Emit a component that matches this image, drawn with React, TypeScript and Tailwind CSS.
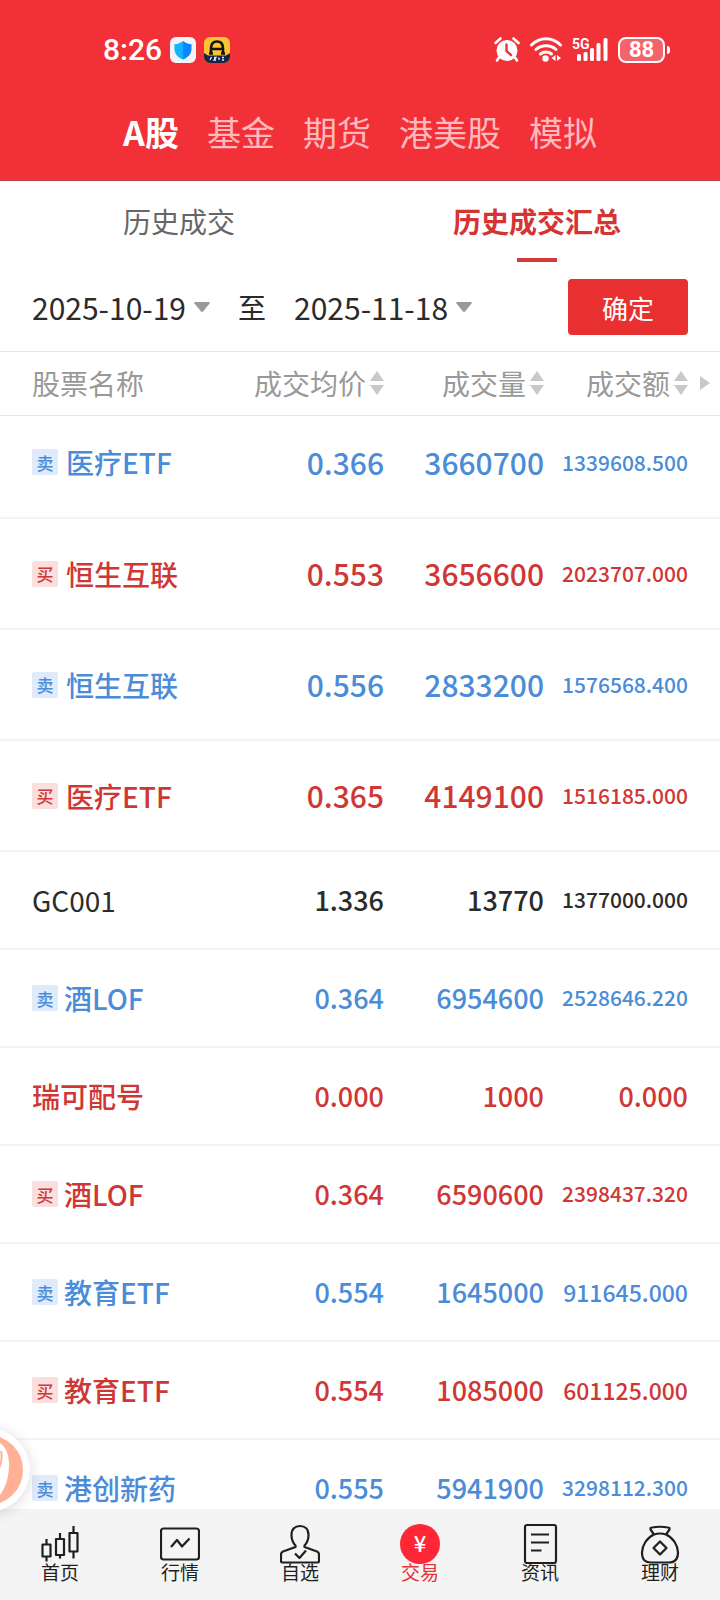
import React, { useState } from 'react';

type Side = 'buy' | 'sell' | 'none';

interface Trade {
  name: string;
  side: Side;
  tag?: boolean;
  price: string;
  volume: string;
  amount: string;
  large?: boolean;
}

const trades: Trade[] = [
  { name: '医疗ETF', side: 'sell', tag: true, price: '0.366', volume: '3660700', amount: '1339608.500', large: true },
  { name: '恒生互联', side: 'buy', tag: true, price: '0.553', volume: '3656600', amount: '2023707.000', large: true },
  { name: '恒生互联', side: 'sell', tag: true, price: '0.556', volume: '2833200', amount: '1576568.400', large: true },
  { name: '医疗ETF', side: 'buy', tag: true, price: '0.365', volume: '4149100', amount: '1516185.000', large: true },
  { name: 'GC001', side: 'none', price: '1.336', volume: '13770', amount: '1377000.000' },
  { name: '酒LOF', side: 'sell', tag: true, price: '0.364', volume: '6954600', amount: '2528646.220' },
  { name: '瑞可配号', side: 'buy', price: '0.000', volume: '1000', amount: '0.000' },
  { name: '酒LOF', side: 'buy', tag: true, price: '0.364', volume: '6590600', amount: '2398437.320' },
  { name: '教育ETF', side: 'sell', tag: true, price: '0.554', volume: '1645000', amount: '911645.000' },
  { name: '教育ETF', side: 'buy', tag: true, price: '0.554', volume: '1085000', amount: '601125.000' },
  { name: '港创新药', side: 'sell', tag: true, price: '0.555', volume: '5941900', amount: '3298112.300' },
];

const markets = ['A股', '基金', '期货', '港美股', '模拟'];
const subTabs = ['历史成交', '历史成交汇总'];

const getSideColor = (side: Side) => {
  switch (side) {
    case 'buy': return 'text-[#cf3735]';
    case 'sell': return 'text-[#4b8cd8]';
    case 'none': return 'text-[#2b2b2b]';
  }
};

// Long amounts are set smaller so that they stay inside the column
const getAmountSize = (amount: string) => {
  if (amount.length > 10) return 'text-[21px]';
  if (amount.length > 9) return 'text-[23px]';
  return 'text-[27px]';
};

function StatusBar() {
  return (
    <div className="flex items-center justify-between pl-[103px] pr-[50px] pt-8">
      <div className="flex items-center gap-2">
        <span className="font-[Roboto,sans-serif] text-[30px] font-medium leading-9">8:26</span>
        <svg width="26" height="26" viewBox="0 0 26 26" aria-hidden="true">
          <defs>
            <linearGradient id="shield">
              <stop offset="0.45" stopColor="#14b4fb" />
              <stop offset="0.55" stopColor="#0a84ff" />
            </linearGradient>
          </defs>
          <rect width="26" height="26" rx="6" fill="#f1f3fb" />
          <path d="M13 4c2.600 2 5 3 8.500 3.200V12c0 5-3.500 8.500-8.500 10.500C8 20.500 4.500 17 4.500 12V7.200C8 7 10.400 6 13 4z" fill="url(#shield)" />
        </svg>
        <svg width="26" height="26" viewBox="0 0 26 26" aria-hidden="true">
          <rect width="26" height="26" rx="6" fill="#fbc531" />
          <path d="M0 16l4 2.500h18l4-2.500v4a6 6 0 0 1-6 6H6a6 6 0 0 1-6-6z" fill="#182445" />
          <path d="M9 16.500H5M21 16.500h-4M7 16v-4.500C7 7 9 4.500 13 4.500s6 2.500 6 7V16M7.500 12h11" fill="none" stroke="#14130f" strokeWidth="2.600" />
          <path d="M6 23l1.500-3M10 20.500h2l-2 2.500h2M15 20.500v2.500M18 20.500h2M18 23h2" fill="none" stroke="#e8ecf8" strokeWidth="1.300" />
        </svg>
      </div>
      <div className="flex items-center">
        <svg width="26" height="26" viewBox="0 0 26 26" fill="none" stroke="#fff" aria-hidden="true">
          <circle cx="13" cy="13.500" r="10.500" fill="#fff" stroke="none" />
          <path d="M1.500 6L6.500 1.500M24.500 6l-5-4.500M5 20.500L3 23.500M21 20.500l2 3" strokeWidth="2.600" strokeLinecap="round" />
          <path d="M12.500 7.500v6.500l4.500 4" stroke="#f13038" strokeWidth="2.400" strokeLinecap="round" />
        </svg>
        <svg className="ml-2.5" width="32" height="26" viewBox="0 0 32 26" fill="none" stroke="#fff" aria-hidden="true">
          <path d="M1.500 8C10-.2 22-.2 30.500 8" strokeWidth="3" strokeLinecap="round" />
          <path d="M6 12.500c5.500-5 14.500-5 20 0M10.500 17c3-2.600 8-2.600 11 0" strokeWidth="3" strokeLinecap="round" />
          <circle cx="15.500" cy="21.500" r="3.200" fill="#fff" stroke="none" />
          <path d="M25.500 18v6l-4-3zM27 18v6l4-3z" fill="#fff" stroke="none" />
        </svg>
        <svg className="ml-2.5" width="36" height="26" viewBox="0 0 36 26" fill="#fff" aria-label="5G">
          <text x="0" y="12" fontSize="14" fontWeight="700" fontFamily="Roboto, sans-serif">5G</text>
          <rect x="5" y="17" width="4" height="7" rx="1.500" />
          <rect x="11.500" y="15" width="4" height="9" rx="1.500" />
          <rect x="18" y="11" width="4" height="13" rx="1.500" />
          <rect x="24.500" y="6" width="4" height="18" rx="1.500" />
          <rect x="31.500" y="1" width="4" height="23" rx="1.500" />
        </svg>
        <div className="ml-2.5 flex items-center gap-0.5">
          <span className="flex h-[26px] w-[47px] items-center justify-center rounded-lg border-2 border-white bg-white/25 font-[Roboto,sans-serif] text-[22px] font-bold leading-none">
            88
          </span>
          <span className="h-2 w-[3px] rounded-r-sm bg-white" />
        </div>
      </div>
    </div>
  );
}

function SortArrows() {
  return (
    <svg width="14" height="24" viewBox="0 0 14 24" fill="#c8c8c8" aria-hidden="true">
      <path d="M7 0l7 10H0zM7 24l7-10H0z" />
    </svg>
  );
}

function DateSelect({ label, value }: { label: string; value: string }) {
  return (
    <button type="button" aria-label={label} className="flex items-center gap-2 text-[#2b2b2b]">
      <span className="text-[30px] leading-8">{value}</span>
      <svg width="16" height="10" viewBox="0 0 16 10" fill="#999" aria-hidden="true">
        <path d="M1 0h14q1.500 0 .5 1.500L9 9.500q-1 .8-2 0L.5 1.500Q-.5 0 1 0z" />
      </svg>
    </button>
  );
}

function SideTag({ side }: { side: Side }) {
  const color = side === 'buy' ? 'bg-[#fbdfdf]' : 'bg-[#dfebfa]';
  return (
    <span className={`flex size-[26px] items-center justify-center rounded-xs text-[17px] leading-none ${color}`}>
      {side === 'buy' ? '买' : '卖'}
    </span>
  );
}

const navItems = [
  {
    label: '首页',
    icon: (
      <path d="M2.500 21.500h8v12h-8zM6.500 16v5.500M6.500 33.500v5M16 16h8v16h-8zM20 10v6M20 32v3.500M29.500 10h8v18.500h-8zM33.500 3v7M33.500 28.500V35.500" />
    ),
  },
  {
    label: '行情',
    icon: (
      <>
        <rect x="1" y="5.500" width="38" height="31" rx="2.500" />
        <path d="M11 24l6-7 5 6.500 7.500-8" />
      </>
    ),
  },
  {
    label: '自选',
    icon: (
      <>
        <path d="M15.500 22.500C12.500 19.500 11.500 17 11.500 12c0-6 3.500-9 8.500-9s8.500 3 8.500 9c0 5-1 7.500-4 10.500v1.500L37 28.500q2 .8 2 3V38q0 1.500-1.500 1.500h-35Q1 39.500 1 38v-6.500q0-2.200 2-3L15.500 24z" />
        <path d="M15 30.500l4.500 4.500 6.500-7.500" />
      </>
    ),
  },
  {
    label: '交易',
    icon: (
      <>
        <circle cx="20" cy="21" r="20" fill="#ff2636" stroke="none" />
        <text x="20" y="29" textAnchor="middle" fontSize="22" fontWeight="500" fill="#fff" stroke="none">¥</text>
      </>
    ),
  },
  {
    label: '资讯',
    icon: (
      <>
        <rect x="5" y="2" width="31" height="38" rx="2" />
        <path d="M11 11.500h18M11 19.500h18M11 27.500h10.500" />
      </>
    ),
  },
  {
    label: '理财',
    icon: (
      <>
        <path d="M14 11.500l-3.500-5Q10 4.500 12 4.500q8-1.500 16 0 2 0 1.500 2l-3.500 5" />
        <path d="M14 11.500q6-2 12 0c7 3 12 11 12 18 0 8-4 10-9 10H11c-5 0-9-2-9-10 0-7 5-15 12-18z" />
        <path d="M20 18.500l6.500 6.500-6.500 6.500-6.500-6.500z" />
      </>
    ),
  },
];

export default function App() {
  const [market, setMarket] = useState('A股');
  const [subTab, setSubTab] = useState('历史成交汇总');
  const [activeNav, setActiveNav] = useState('交易');

  return (
    <div className="relative flex h-screen flex-col overflow-hidden bg-white font-['Noto_Sans_CJK_SC',sans-serif]">
      <header className="shrink-0 border-b border-[#b5444a] bg-[#f13038] text-white">
        <StatusBar />
        <nav className="flex justify-center gap-7 pb-6 pt-10">
          {markets.map((item) => (
            <button
              key={item}
              type="button"
              onClick={() => setMarket(item)}
              className={`text-[34px] leading-[48px] ${market === item ? 'font-bold' : 'text-[#ffb9bd]'}`}
            >
              {item}
            </button>
          ))}
        </nav>
      </header>

      <div className="grid shrink-0 grid-cols-2 pr-1">
        {subTabs.map((item) => (
          <button
            key={item}
            type="button"
            onClick={() => setSubTab(item)}
            className={`flex flex-col items-center gap-[17px] pt-5 text-[28px] leading-10 ${subTab === item ? 'font-bold text-[#d43533]' : 'text-[#666]'}`}
          >
            {item}
            <span className={`h-1 w-10 ${subTab === item ? 'bg-[#d43a38]' : ''}`} />
          </button>
        ))}
      </div>

      <div className="flex shrink-0 items-center border-b border-[#e6e6e6] px-8 pb-4 pt-[17px]">
        <DateSelect label="开始日期" value="2025-10-19" />
        <span className="px-7 text-[28px] leading-8 text-[#2b2b2b]">至</span>
        <DateSelect label="结束日期" value="2025-11-18" />
        <button type="button" className="ml-auto h-14 w-30 rounded-sm bg-[#e83030] text-[26px] text-white">
          确定
        </button>
      </div>

      <main className="min-h-0 flex-1 overflow-hidden">
        <table className="w-full table-fixed border-collapse">
          <colgroup>
            <col />
            <col className="w-40" />
            <col className="w-40" />
            <col className="w-44" />
          </colgroup>
          <thead>
            <tr className="h-[63px] border-b border-[#e6e6e6] text-[28px] leading-10 text-[#999]">
              <th className="pl-8 text-left font-normal">股票名称</th>
              {['成交均价', '成交量', '成交额'].map((title) => (
                <th key={title} className="font-normal last:pr-2.5">
                  <div className="flex items-center justify-end gap-2">
                    <button type="button" className="flex items-center gap-1 whitespace-nowrap">
                      {title}
                      <SortArrows />
                    </button>
                    {title === '成交额' && (
                      <svg className="ml-1" width="10" height="14" viewBox="0 0 10 14" fill="#c8c8c8" aria-hidden="true">
                        <path d="M0 0l10 7-10 7z" />
                      </svg>
                    )}
                  </div>
                </th>
              ))}
            </tr>
          </thead>
          <tbody>
            {trades.map((trade, i) => {
              const height = trade.large ? (i === 0 ? 'h-[103px]' : 'h-[111px]') : 'h-[98px]';
              const pad = i === 0 ? 'pb-2' : '';
              const size = trade.large ? 'text-[30px]' : 'text-[27px]';
              return (
                <tr key={i} className={`border-b-2 border-[#f4f4f4] font-medium ${height} ${getSideColor(trade.side)}`}>
                  <td className={`pl-8 ${pad}`}>
                    <div className={`flex items-center ${trade.large ? 'gap-2' : 'gap-1.5'}`}>
                      {trade.tag && <SideTag side={trade.side} />}
                      <span className={`whitespace-nowrap text-[28px] leading-10 ${trade.side === 'none' ? 'font-normal' : ''}`}>
                        {trade.name}
                      </span>
                    </div>
                  </td>
                  <td className={`text-right ${size} ${pad}`}>{trade.price}</td>
                  <td className={`text-right ${size} ${pad}`}>{trade.volume}</td>
                  <td className={`pr-8 text-right ${getAmountSize(trade.amount)} ${pad}`}>{trade.amount}</td>
                </tr>
              );
            })}
          </tbody>
        </table>
      </main>

      <footer className="grid shrink-0 grid-cols-6 bg-[#f4f4f4] pb-[18px] pt-3.5">
        {navItems.map((item) => (
          <button
            key={item.label}
            type="button"
            onClick={() => setActiveNav(item.label)}
            className={`flex flex-col items-center ${activeNav === item.label ? 'text-[#e8323c]' : 'text-[#1f1f1f]'}`}
          >
            <svg
              width="40"
              height="41"
              viewBox="0 0 40 41"
              fill="none"
              stroke="#1f1f1f"
              strokeWidth="2.200"
              strokeLinejoin="round"
              aria-hidden="true"
            >
              {item.icon}
            </svg>
            <span className="-mt-0.5 text-[19px] leading-5">{item.label}</span>
          </button>
        ))}
      </footer>

      {/* Floating assistant, half hidden behind the left edge */}
      <button
        type="button"
        aria-label="助手"
        className="absolute bottom-[88px] -left-[54px] size-[84px] rounded-full bg-white p-[7px] shadow-[0_2px_14px_rgba(0,0,0,0.15)]"
      >
        <svg className="size-full" viewBox="0 0 70 70" aria-hidden="true">
          <circle cx="35" cy="35" r="35" fill="#ffb195" />
          <path d="M47 8c6 4 9 12 9 22 0 16-6 28-14 36H30V40z" fill="#fff" />
          <path d="M48 16c2 8-1 18-8 28" fill="none" stroke="#ffb195" strokeWidth="2" />
        </svg>
      </button>
    </div>
  );
}
